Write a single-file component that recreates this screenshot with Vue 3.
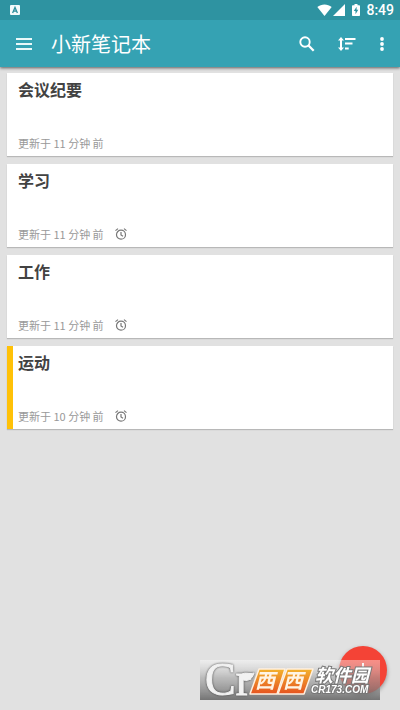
<script setup>
const notes = [
  { id: 1, title: '会议纪要', updated: '更新于 11 分钟 前', alarm: false, marked: false },
  { id: 2, title: '学习', updated: '更新于 11 分钟 前', alarm: true, marked: false },
  { id: 3, title: '工作', updated: '更新于 11 分钟 前', alarm: true, marked: false },
  { id: 4, title: '运动', updated: '更新于 10 分钟 前', alarm: true, marked: true },
]
</script>

<template>
  <div class="app">
    <header class="header">
      <div class="status">
        <svg class="input-badge" width="10" height="10" viewBox="0 0 10 10">
          <rect width="10" height="10" rx="1" fill="#f4fbfb" />
          <path d="M2.6 8 5 2.4 7.4 8M3.6 6.2h2.8" fill="none" stroke="#2e8f9c" stroke-width="1.3" />
        </svg>
        <svg width="15" height="12" viewBox="0 0 15 12">
          <path d="M0.3 3C4.400-.4 10.600-.4 14.700 3L7.500 12Z" fill="#fff" />
        </svg>
        <svg class="signal" width="12" height="12" viewBox="0 0 12 12">
          <path d="M12 0V12H0Z" fill="#fff" />
        </svg>
        <svg class="battery" width="8" height="12" viewBox="0 0 8 12">
          <path d="M2.500 0h3v1.300H7.200q.8 0 .8.800v9.100q0 .8-.8.800H.8q-.8 0-.8-.8V2.100q0-.8.8-.8h1.700Z" fill="#fff" />
          <path d="M4.600 2.700 1.800 7.100h1.700v3.200l2.800-4.500H4.600Z" fill="#2e93a1" />
        </svg>
        <time class="clock">8:49</time>
      </div>
      <div class="toolbar">
        <button class="icon-button" aria-label="菜单">
          <svg width="16" height="12" viewBox="0 0 16 12">
            <path d="M0 1h16M0 6h16M0 11h16" stroke="#e9f8f9" stroke-width="2" />
          </svg>
        </button>
        <h1 class="title">小新笔记本</h1>
        <button class="icon-button" aria-label="搜索">
          <svg width="16" height="16" viewBox="0 0 16 16" fill="none" stroke="#fff">
            <circle cx="6" cy="6" r="4.700" stroke-width="1.900" />
            <path d="m9.500 9.500 5.200 5.200" stroke-width="2.300" />
          </svg>
        </button>
        <button class="icon-button sort" aria-label="排序">
          <svg width="18" height="14" viewBox="0 0 18 14">
            <path d="M3 2v10M7 2h10.500M7 6.600h7.500M7 11.400h3.700" stroke="#fff" stroke-width="2" />
            <path d="M3 0 6 3.500H0ZM3 14 0 10.500H6Z" fill="#fff" />
          </svg>
        </button>
        <button class="icon-button more" aria-label="更多">
          <svg width="4" height="14" viewBox="0 0 4 14" fill="#fff">
            <circle cx="2" cy="2" r="1.900" /><circle cx="2" cy="7" r="1.900" /><circle cx="2" cy="12" r="1.900" />
          </svg>
        </button>
      </div>
    </header>

    <main class="notes">
      <article v-for="note in notes" :key="note.id" class="card" :class="{ marked: note.marked }">
        <h2 class="card-title">{{ note.title }}</h2>
        <footer class="card-foot">
          <span>{{ note.updated }}</span>
          <svg v-if="note.alarm" width="12" height="12" viewBox="0 0 12 12" fill="none" stroke="#777" stroke-width="1.200">
            <circle cx="6" cy="6.700" r="4.500" />
            <path d="M.5 2.600 3 .6M11.500 2.600 9 .6M6 4v3l2 1.300" />
          </svg>
        </footer>
      </article>
    </main>

    <button class="add" aria-label="新建笔记">
      <svg width="14" height="14" viewBox="0 0 14 14">
        <path d="M7 0v14M0 7h14" stroke="#fff" stroke-width="2" />
      </svg>
    </button>

    <div class="brand">
      <svg width="180" height="40" viewBox="0 0 180 40">
        <defs>
          <linearGradient id="plate" x2="0" y2="1">
            <stop offset="0" stop-color="#fff" stop-opacity=".4" />
            <stop offset=".45" stop-color="#a0a0a0" stop-opacity=".6" />
            <stop offset="1" stop-color="#606060" stop-opacity=".85" />
          </linearGradient>
          <linearGradient id="tile" x2="0" y2="1">
            <stop offset="0" stop-color="#f3b32e" />
            <stop offset="1" stop-color="#e65320" />
          </linearGradient>
        </defs>
        <rect width="180" height="40" fill="url(#plate)" />
        <g class="mark">
          <text x="5" y="35" font-size="46">Cr</text>
          <path d="M40 17C43 10 49 15 54 13 52 21 44 23 40 17Z" />
        </g>
        <g fill="url(#tile)" stroke="#fff0df" stroke-width="1.500" stroke-linejoin="round">
          <path d="M59 9H85L77 34H50Z" />
          <path d="M87 9H113L104 34H78Z" />
        </g>
        <g class="tile-text">
          <text x="55" y="28">西</text>
          <text x="83" y="28">西</text>
        </g>
        <text class="name" x="115" y="22">软件园</text>
        <text class="domain" x="111" y="33">CR173.COM</text>
      </svg>
    </div>
  </div>
</template>

<style>
body {
  background: #e1e1e1;
}
</style>

<style scoped>
.app {
  min-height: 100vh;
  font-family: Roboto, "Noto Sans CJK SC", sans-serif;
}
.header {
  position: relative;
  background: #35a2b3;
  box-shadow: 0 1px 3px rgba(0, 0, 0, 0.6);
}
.status {
  display: flex;
  align-items: center;
  height: 20px;
  padding: 0 6px 0 10px;
  background: #2e93a1;
}
.input-badge {
  margin-right: auto;
}
.signal {
  margin-left: 1px;
}
.battery {
  margin: 0 6px 0 7px;
}
.clock {
  color: #fff;
  font-size: 14px;
  font-weight: 500;
  line-height: 20px;
}
.toolbar {
  display: flex;
  align-items: center;
  height: 47px;
  padding: 0 8px;
}
.icon-button {
  display: flex;
  align-items: center;
  justify-content: center;
  width: 32px;
  height: 40px;
  padding: 0;
  border: 0;
  background: none;
}
.sort {
  margin-left: 8px;
}
.more {
  width: 20px;
  margin-left: 9px;
}
.title {
  flex: 1;
  margin: 0 0 0 11px;
  padding-top: 2px;
  color: #fff;
  font-size: 20px;
  font-weight: 400;
  line-height: 28px;
}
.notes {
  display: flex;
  flex-direction: column;
  gap: 8px;
  padding: 6px 7px;
}
.card {
  display: flex;
  flex-direction: column;
  justify-content: space-between;
  box-sizing: border-box;
  min-height: 83px;
  padding: 6px 11px;
  background: #fff;
  box-shadow: 0 1px 1px rgba(0, 0, 0, 0.18);
}
.marked {
  padding-left: 5px;
  border-left: 6px solid #ffc107;
}
.card-title {
  margin: 0;
  color: #424242;
  font-size: 16px;
  font-weight: 700;
  line-height: 24px;
}
.card-foot {
  display: flex;
  align-items: center;
  gap: 11px;
  color: #999;
  font-family: "Noto Sans CJK SC", sans-serif;
  font-size: 11px;
  line-height: 14px;
}
.add {
  position: fixed;
  right: 13px;
  bottom: 16px;
  display: flex;
  align-items: center;
  justify-content: center;
  width: 48px;
  height: 48px;
  padding: 0;
  border: 0;
  border-radius: 50%;
  background: #f44336;
  box-shadow: 0 2px 4px rgba(0, 0, 0, 0.35);
}
.brand {
  position: fixed;
  right: 20px;
  bottom: 10px;
  display: flex;
  pointer-events: none;
}
.mark {
  fill: #f2f2f2;
  stroke: #f2f2f2;
  stroke-width: 1px;
  font-family: "Liberation Serif", serif;
  filter: drop-shadow(0 0 1px #444);
}
.tile-text {
  fill: #fff4e4;
  font-size: 20px;
  font-style: italic;
  font-weight: 700;
}
.name {
  fill: #fff;
  stroke: #777;
  stroke-width: 2px;
  paint-order: stroke;
  font-size: 18px;
  font-style: italic;
  font-weight: 700;
}
.domain {
  fill: #fff;
  stroke: #777;
  stroke-width: 2px;
  paint-order: stroke;
  font-family: "Liberation Sans", sans-serif;
  font-size: 10px;
  font-style: italic;
  font-weight: 700;
}
</style>
